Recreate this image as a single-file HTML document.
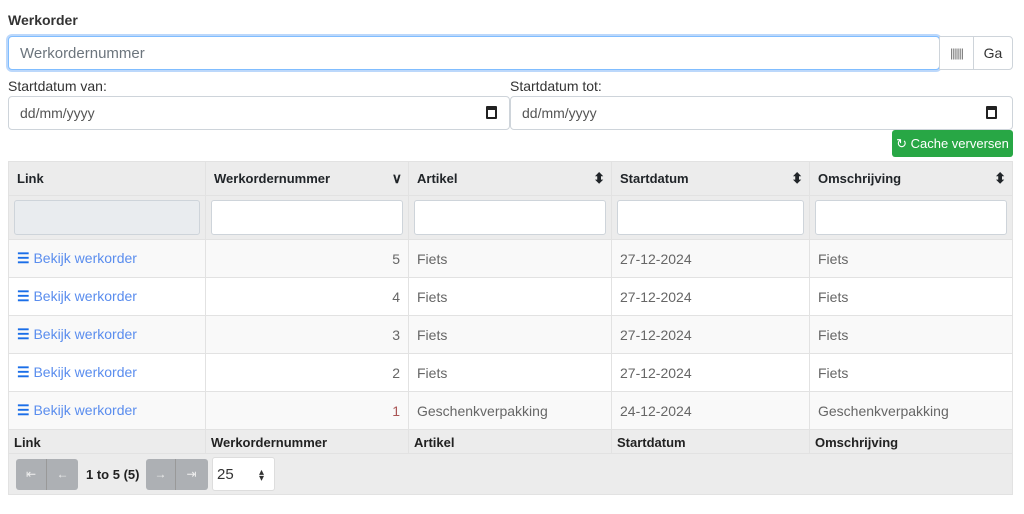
<!DOCTYPE html><html><head><style>
*{box-sizing:border-box;margin:0;padding:0}
body{width:1024px;height:514px;background:#fff;font-family:"Liberation Sans",sans-serif;color:#212529;position:relative;overflow:hidden}
.a{position:absolute}
.inp{position:absolute;border:1px solid #ced4da;border-radius:4px;background:#fff;color:#6c757d;font-size:14px;padding-left:11px;display:flex;align-items:center}
table{position:absolute;left:8px;top:161px;width:1005px;border-collapse:collapse;font-size:14px}
td,th{border:1px solid #e2e2e2;padding:0 8px}
th{background:#ececec;text-align:left;font-size:13px;font-weight:bold;height:34px;position:relative}
.f td{background:#ececec;height:44px;padding:4px 5px}
.f div{height:35px;border:1px solid #ced4da;border-radius:3px;background:#fff}
.r td{height:38px;color:#666}
.r:nth-child(odd) td{background:#f9f9f9}
.r td.lnk{color:#5a8dee}
.num{text-align:right}
.ft td{background:#ececec;height:25px;font-weight:bold;font-size:13px;color:#222;padding:0 5px}
.s{position:absolute;right:6px;top:8px;font-size:14px;font-weight:bold}
</style></head><body>
<div class="a" style="left:8px;top:12px;font-size:14px;font-weight:bold;color:#333">Werkorder</div>
<div class="inp" style="left:8px;top:36px;width:932px;height:34px;border-color:#80bdff;box-shadow:0 0 0 2px #bcd8fb;font-size:15px">Werkordernummer</div>
<div class="inp" style="left:939px;top:36px;width:35px;height:34px;border-radius:0;justify-content:center;padding:0;font-size:12px;color:#666;letter-spacing:-1px">||||||</div>
<div class="inp" style="left:973px;top:36px;width:40px;height:34px;border-radius:0 4px 4px 0;justify-content:center;padding:0;color:#333">Ga</div>
<div class="a" style="left:8px;top:78px;font-size:14px;color:#333">Startdatum van:</div>
<div class="a" style="left:510px;top:78px;font-size:14px;color:#333">Startdatum tot:</div>
<div class="inp" style="left:8px;top:96px;width:502px;height:34px;color:#555">dd/mm/yyyy<span style="position:absolute;right:12px;top:9px;width:11px;height:13px;border:2px solid #222;border-top-width:4px;border-radius:1px"></span></div>
<div class="inp" style="left:510px;top:96px;width:503px;height:34px;color:#555">dd/mm/yyyy<span style="position:absolute;right:15px;top:9px;width:11px;height:13px;border:2px solid #222;border-top-width:4px;border-radius:1px"></span></div>
<div class="a" style="left:892px;top:130px;width:121px;height:27px;background:#28a745;border-radius:3px;color:#fff;font-size:13px;display:flex;align-items:center;justify-content:center">&#x21bb; Cache verversen</div>
<table>
<tr><th style="width:197px">Link</th><th style="width:203px">Werkordernummer<span class="s">&#x2228;</span></th><th style="width:203px">Artikel<span class="s">&#x2b0d;</span></th><th style="width:198px">Startdatum<span class="s">&#x2b0d;</span></th><th>Omschrijving<span class="s">&#x2b0d;</span></th></tr>
<tr class="f"><td><div style="background:#e9ecef"></div></td><td><div></div></td><td><div></div></td><td><div></div></td><td><div></div></td></tr>
<tr class="r"><td class="lnk"><b style="color:#1a6ee8">&#9776;</b> Bekijk werkorder</td><td class="num">5</td><td>Fiets</td><td>27-12-2024</td><td>Fiets</td></tr>
<tr class="r"><td class="lnk"><b style="color:#1a6ee8">&#9776;</b> Bekijk werkorder</td><td class="num">4</td><td>Fiets</td><td>27-12-2024</td><td>Fiets</td></tr>
<tr class="r"><td class="lnk"><b style="color:#1a6ee8">&#9776;</b> Bekijk werkorder</td><td class="num">3</td><td>Fiets</td><td>27-12-2024</td><td>Fiets</td></tr>
<tr class="r"><td class="lnk"><b style="color:#1a6ee8">&#9776;</b> Bekijk werkorder</td><td class="num">2</td><td>Fiets</td><td>27-12-2024</td><td>Fiets</td></tr>
<tr class="r"><td class="lnk"><b style="color:#1a6ee8">&#9776;</b> Bekijk werkorder</td><td class="num" style="color:#a55">1</td><td>Geschenkverpakking</td><td>24-12-2024</td><td>Geschenkverpakking</td></tr>
<tr class="ft"><td>Link</td><td>Werkordernummer</td><td>Artikel</td><td>Startdatum</td><td>Omschrijving</td></tr>
</table>
<div class="a" style="left:8px;top:453px;width:1005px;height:42px;background:#ececec;border:1px solid #e2e2e2"></div>
<div class="a" style="left:16px;top:459px;width:62px;height:31px;background:#adb0b4;border-radius:3px;color:#eee;font-size:12px;display:flex"><span style="width:31px;text-align:center;line-height:31px;border-right:1px solid #999">&#x21e4;</span><span style="width:31px;text-align:center;line-height:31px">&larr;</span></div>
<div class="a" style="left:86px;top:467px;font-size:13px;font-weight:bold;color:#222">1 to 5 (5)</div>
<div class="a" style="left:146px;top:459px;width:62px;height:31px;background:#adb0b4;border-radius:3px;color:#eee;font-size:12px;display:flex"><span style="width:30px;text-align:center;line-height:31px;border-right:1px solid #999">&rarr;</span><span style="width:31px;text-align:center;line-height:31px">&#x21e5;</span></div>
<div class="a" style="left:212px;top:457px;width:63px;height:34px;background:#fff;border:1px solid #ddd;border-radius:3px;font-size:15px;color:#333;padding:8px 0 0 4px">25<span style="position:absolute;right:10px;top:9px;font-size:10px">&#x25b4;<br></span><span style="position:absolute;right:10px;top:15px;font-size:10px">&#x25be;</span></div>
</body></html>
